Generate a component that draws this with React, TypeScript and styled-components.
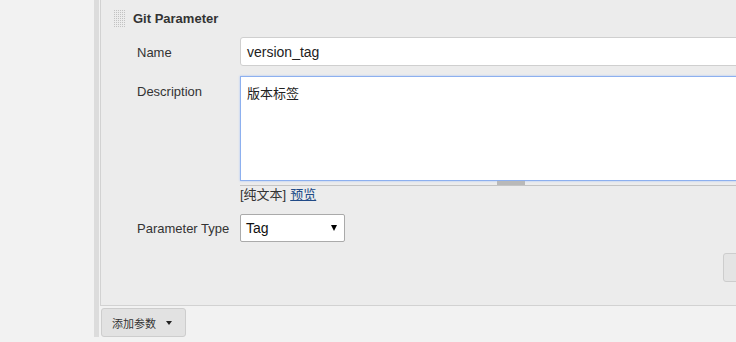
import React from "react";
import styled, { createGlobalStyle } from "styled-components";

const GlobalStyle = createGlobalStyle`
  html, body {
    margin: 0;
    padding: 0;
    background: #f2f2f2;
  }
  body {
    font-family: "Liberation Sans", Arial, "Noto Sans CJK SC", sans-serif;
    font-size: 13px;
    color: #333;
  }
`;

const Page = styled.div`
  display: flex;
  width: 736px;
  height: 342px;
  overflow: hidden;
  background: #f2f2f2;
`;

const Sidebar = styled.div`
  width: 94px;
  flex-shrink: 0;
`;

const Rail = styled.div`
  width: 5px;
  height: 337px;
  flex-shrink: 0;
  background: #dcdcdc;
  margin-right: 1px;
`;

const Main = styled.div`
  display: flex;
  flex-direction: column;
  flex-shrink: 0;
`;

const Panel = styled.div`
  width: 710px;
  height: 306px;
  box-sizing: border-box;
  background: #ececec;
  border-left: 1px solid #d2d2d2;
  border-bottom: 1px solid #d2d2d2;
  display: flex;
  flex-direction: column;
`;

const TitleRow = styled.div`
  display: flex;
  align-items: center;
  gap: 7px;
  padding: 10px 0 0 12px;
  height: 17px;
`;

const Grip = styled.div`
  width: 13px;
  height: 17px;
  background: conic-gradient(#c2c2c2 25%, transparent 0) 0 0 / 2px 2px;
`;

const Title = styled.span`
  font-weight: bold;
  font-size: 13px;
  color: #333;
`;

const Form = styled.div`
  display: grid;
  grid-template-columns: 103px 1fr;
  padding-left: 36px;
  margin-top: 10px;
  row-gap: 10px;
`;

const Label = styled.div<{ $top?: number }>`
  padding-top: ${(p) => p.$top ?? 1}px;
  display: flex;
  align-items: ${(p) => (p.$top ? "flex-start" : "center")};
  color: #333;
`;

const TextInput = styled.div`
  width: 542px;
  height: 29px;
  box-sizing: border-box;
  background: #fff;
  border: 1px solid #cfcfcf;
  border-radius: 3px;
  display: flex;
  align-items: center;
  padding-left: 6px;
  font-size: 14px;
  color: #222;
`;

const AreaWrap = styled.div`
  width: 542px;
  display: flex;
  flex-direction: column;
`;

const TextArea = styled.div`
  height: 105px;
  box-sizing: border-box;
  background: #fff;
  border: 1px solid #8db0ef;
  box-shadow: 0 0 2px #a9c4f5;
  padding: 6px 0 0 6px;
  font-family: "Noto Sans CJK SC", sans-serif;
  font-size: 13px;
  color: #222;
`;

const ResizeStrip = styled.div`
  height: 4px;
  border-bottom: 1px solid #c4c4c4;
  display: flex;
  justify-content: center;
`;

const ResizeHandle = styled.div`
  width: 28px;
  height: 4px;
  background: #b9b9b9;
`;

const Help = styled.div`
  margin-top: 1px;
  line-height: 16px;
  font-family: "Liberation Sans", "Noto Sans CJK SC", sans-serif;
  color: #333;
`;

const HelpLink = styled.a`
  color: #204a87;
  text-decoration: underline;
  margin-left: 4px;
`;

const Select = styled.div`
  margin-top: 1px;
  width: 105px;
  height: 28px;
  box-sizing: border-box;
  background: #fff;
  border: 1px solid #aaa;
  border-radius: 2px;
  display: flex;
  align-items: center;
  justify-content: space-between;
  padding: 0 7px 0 5px;
  font-size: 14px;
  color: #111;
`;

const Caret = styled.span<{ $w: number; $h: number; $color?: string }>`
  width: 0;
  height: 0;
  border-left: ${(p) => p.$w / 2}px solid transparent;
  border-right: ${(p) => p.$w / 2}px solid transparent;
  border-top: ${(p) => p.$h}px solid ${(p) => p.$color ?? "#111"};
`;

const ActionRow = styled.div`
  display: flex;
  justify-content: flex-end;
  margin-top: 11px;
`;

const GhostButton = styled.div`
  width: 87px;
  height: 29px;
  box-sizing: border-box;
  background: #e4e4e4;
  border: 1px solid #cdcdcd;
  border-radius: 3px;
`;

const AddButton = styled.div`
  margin: 2px 0 0 1px;
  width: 85px;
  height: 29px;
  box-sizing: border-box;
  background: #e2e2e2;
  border: 1px solid #cdcdcd;
  border-radius: 3px;
  display: flex;
  align-items: center;
  gap: 10px;
  padding-left: 10px;
  font-family: "Noto Sans CJK SC", sans-serif;
  font-size: 11px;
  color: #333;
`;

export default function App() {
  return (
    <Page>
      <GlobalStyle />
      <Sidebar />
      <Rail />
      <Main>
        <Panel>
          <TitleRow>
            <Grip />
            <Title>Git Parameter</Title>
          </TitleRow>
          <Form>
            <Label>Name</Label>
            <TextInput>version_tag</TextInput>

            <Label $top={8}>Description</Label>
            <AreaWrap>
              <TextArea>版本标签</TextArea>
              <ResizeStrip>
                <ResizeHandle />
              </ResizeStrip>
              <Help>
                [纯文本]
                <HelpLink href="#">预览</HelpLink>
              </Help>
            </AreaWrap>

            <Label>Parameter Type</Label>
            <Select>
              Tag
              <Caret $w={6} $h={6} $color="#000" />
            </Select>
          </Form>
          <ActionRow>
            <GhostButton />
          </ActionRow>
        </Panel>
        <AddButton>
          添加参数
          <Caret $w={7} $h={4} $color="#222" />
        </AddButton>
      </Main>
    </Page>
  );
}
